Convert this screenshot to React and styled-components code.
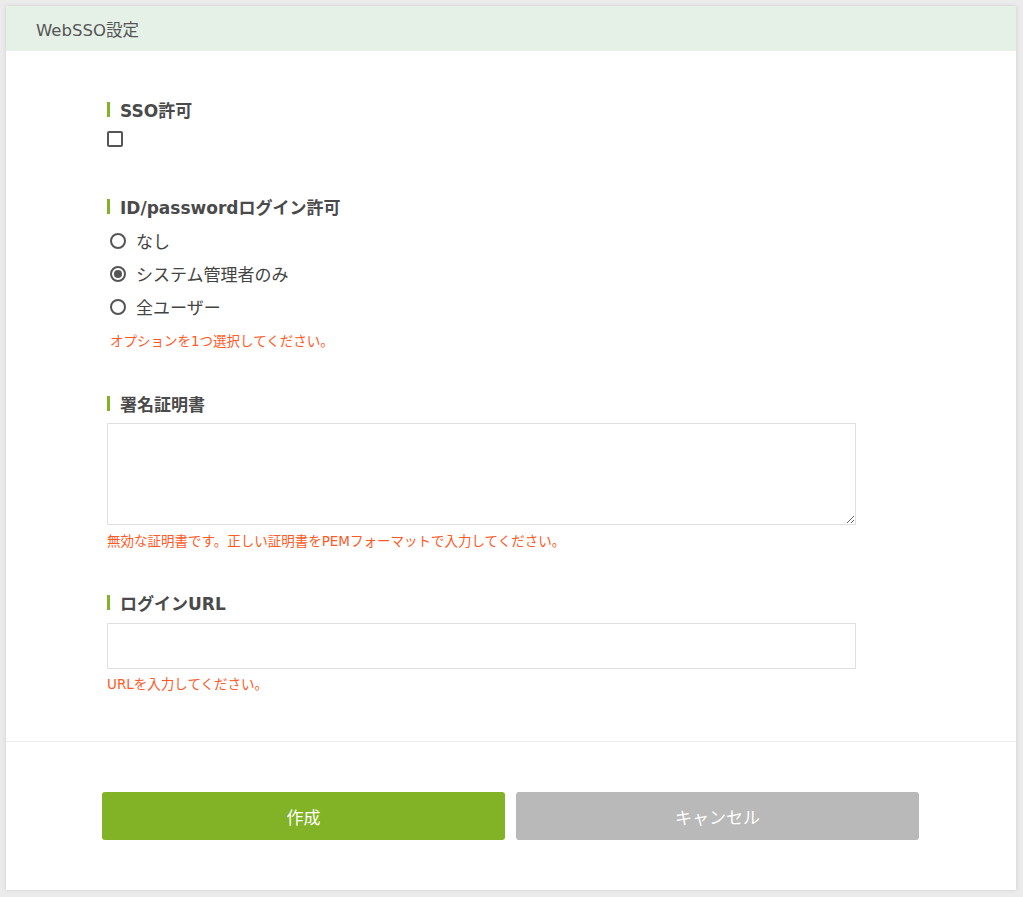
import styled, { createGlobalStyle } from 'styled-components'

const GlobalStyle = createGlobalStyle`
  html, body {
    margin: 0;
    padding: 0;
    background: #ebebeb;
    font-family: "DejaVu Sans", "Noto Sans CJK JP", sans-serif;
    color: #444;
  }
`

const Page = styled.div`
  padding: 6px 7px 7px 6px;
`

const Card = styled.div`
  background: #ffffff;
  box-shadow: 0 0 4px rgba(0, 0, 0, 0.12);
  width: 1010px;
`

const Header = styled.div`
  height: 45px;
  background: #e5f0e7;
  display: flex;
  align-items: center;
  padding-left: 30px;
  font-size: 16.5px;
  color: #555;
`

const Body = styled.div`
  padding: 48px 0 48px 101px;
  display: flex;
  flex-direction: column;
`

const Section = styled.div`
  display: flex;
  flex-direction: column;
  margin-bottom: ${({ $gap }) => $gap}px;
`

const Label = styled.div`
  display: flex;
  align-items: center;
  height: 20px;
  font-size: 17px;
  font-weight: bold;
  color: #4a4a4a;
  &::before {
    content: '';
    width: 3px;
    height: 15px;
    background: #82b225;
    margin-right: 10px;
  }
`

const Checkbox = styled.span`
  display: block;
  width: 12px;
  height: 12px;
  border: 2px solid #555;
  border-radius: 2px;
  margin-top: 12px;
`

const RadioList = styled.div`
  display: flex;
  flex-direction: column;
  margin-top: 8px;
`

const RadioRow = styled.label`
  display: flex;
  align-items: center;
  height: 33px;
  padding-left: 3px;
  font-size: 17px;
  color: #444;
  gap: 10px;
`

const RadioCircle = styled.span`
  width: 12px;
  height: 12px;
  border: 2px solid #555;
  border-radius: 50%;
  display: flex;
  align-items: center;
  justify-content: center;
  &::after {
    content: '';
    display: ${({ $checked }) => ($checked ? 'block' : 'none')};
    width: 8px;
    height: 8px;
    border-radius: 50%;
    background: #555;
  }
`

const ErrorText = styled.div`
  font-size: 13.5px;
  line-height: 18px;
  color: #ff5a26;
  margin-top: ${({ $top }) => $top || 7}px;
  padding-left: ${({ $indent }) => $indent || 0}px;
`

const TextArea = styled.textarea`
  display: block;
  box-sizing: border-box;
  width: 749px;
  height: 102px;
  margin: 10px 0 0;
  border: 1px solid #e0e0e0;
  outline: none;
  font-family: inherit;
`

const Input = styled.input`
  display: block;
  box-sizing: border-box;
  width: 749px;
  height: 46px;
  margin: 11px 0 0;
  border: 1px solid #e0e0e0;
  outline: none;
  font-family: inherit;
`

const Footer = styled.div`
  border-top: 1px solid #ececec;
  padding: 50px 97px 50px 96px;
  display: flex;
  gap: 11px;
`

const Button = styled.button`
  flex: 1;
  height: 48px;
  border: none;
  border-radius: 3px;
  background: ${({ $primary }) => ($primary ? '#82b225' : '#b9b9b9')};
  color: #ffffff;
  font-family: inherit;
  font-size: 17px;
  cursor: pointer;
`

const options = [
  { label: 'なし', checked: false },
  { label: 'システム管理者のみ', checked: true },
  { label: '全ユーザー', checked: false },
]

export default function App() {
  return (
    <Page>
      <GlobalStyle />
      <Card>
        <Header>WebSSO設定</Header>
        <Body>
          <Section $gap={49}>
            <Label>SSO許可</Label>
            <Checkbox />
          </Section>
          <Section $gap={43}>
            <Label>ID/passwordログイン許可</Label>
            <RadioList>
              {options.map((o) => (
                <RadioRow key={o.label}>
                  <RadioCircle $checked={o.checked} />
                  {o.label}
                </RadioRow>
              ))}
            </RadioList>
            <ErrorText $top={9} $indent={3}>オプションを1つ選択してください。</ErrorText>
          </Section>
          <Section $gap={42}>
            <Label>署名証明書</Label>
            <TextArea />
            <ErrorText>無効な証明書です。正しい証明書をPEMフォーマットで入力してください。</ErrorText>
          </Section>
          <Section $gap={0}>
            <Label>ログインURL</Label>
            <Input />
            <ErrorText $top={6}>URLを入力してください。</ErrorText>
          </Section>
        </Body>
        <Footer>
          <Button $primary>作成</Button>
          <Button>キャンセル</Button>
        </Footer>
      </Card>
    </Page>
  )
}
